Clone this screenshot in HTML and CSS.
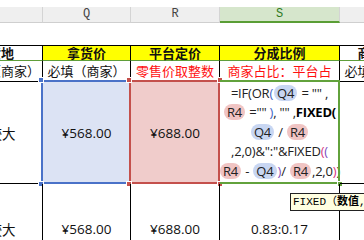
FILE: index.html
```html
<!DOCTYPE html>
<html lang="zh-CN">
<head>
  <meta charset="UTF-8" />
  <title>分成比例</title>
  <link rel="stylesheet" href="styles.css">
</head>
<body>
  <div class="sheet">
    <!-- column headers -->
    <div class="colhead"></div>
    <div class="colhead">Q</div>
    <div class="colhead">R</div>
    <div class="colhead active">S</div>
    <div class="colhead">T</div>

    <!-- row 2: empty -->
    <div class="blank"></div>
    <div class="blank"></div>
    <div class="blank"></div>
    <div class="blank"></div>
    <div class="blank"></div>

    <!-- row 3: titles -->
    <div class="cell title">商品的发货地</div>
    <div class="cell title yellow">拿货价</div>
    <div class="cell title yellow">平台定价</div>
    <div class="cell title yellow">分成比例</div>
    <div class="cell title">商品链接</div>

    <!-- row 4: notes -->
    <div class="cell note">发货地址必填（商家）</div>
    <div class="cell note">必填（商家）</div>
    <div class="cell note red">零售价取整数</div>
    <div class="cell note red">商家占比：平台占</div>
    <div class="cell note">必填（商家）</div>

    <!-- row 5: editing row -->
    <div class="cell num">库存数量较大</div>
    <div class="cell num ref-q">
      ¥568.00
      <div class="frame frame-q">
        <span class="handle tl"></span>
        <span class="handle bl"></span>
      </div>
    </div>
    <div class="cell num ref-r">
      ¥688.00
      <div class="frame frame-r">
        <span class="handle tl"></span>
        <span class="handle bl"></span>
        <span class="handle tr"></span>
        <span class="handle br"></span>
      </div>
    </div>
    <div class="cell formula">
      <div class="formula-text">
        <div>=IF(OR<span class="p-blue">(</span><span class="pill pill-q">Q4</span> = "" ,</div>
        <div><span class="pill pill-r">R4</span> ="" <span class="p-blue">)</span>, "" ,<b>FIXED(</b></div>
        <div><span class="pill pill-q">Q4</span> / <span class="pill pill-r">R4</span></div>
        <div>,2,0)&amp;":"&amp;FIXED<span class="p-pink">(</span><span class="p-purple">(</span></div>
        <div><span class="pill pill-r">R4</span> - <span class="pill pill-q">Q4</span><span class="p-purple">)</span>/ <span class="pill pill-r">R4</span>,2,0<span class="p-pink">)</span>)</div>
      </div>
      <div class="frame frame-s">
        <span class="handle br"></span>
      </div>
    </div>
    <div class="cell"></div>

    <!-- row 6 -->
    <div class="cell num">库存数量较大</div>
    <div class="cell num">¥568.00</div>
    <div class="cell num">¥688.00</div>
    <div class="cell num">0.83:0.17</div>
    <div class="cell"></div>
  </div>

  <div class="tip">FIXED（<b>数值</b>, [小数位数], [无逗号分隔])</div>
</body>
</html>
```

FILE: styles.css
```css
* {
  box-sizing: border-box;
}

body {
  margin: 0;
  padding-top: 7px;
  width: 364px;
  height: 240px;
  overflow: hidden;
  position: relative;
  background: #fff;
  font-family: "Noto Sans CJK SC", sans-serif;
  color: #111;
}

.sheet {
  display: grid;
  grid-template-columns: 135px 88px 89px 120px 88px;
  grid-template-rows: 16px 23px 15px 21px 102px 90px;
  margin-left: -92px;
  width: max-content;
}

.colhead {
  background: #efefef;
  border-right: 1px solid #d4d4d4;
  border-bottom: 1px solid #cfcfcf;
  font-family: "Liberation Mono", monospace;
  font-size: 12px;
  line-height: 15px;
  text-align: center;
  color: #444;
}

.colhead.active {
  background: #d6e6cc;
  border-bottom: 2px solid #5a9e35;
  color: #2e7a1f;
}

.blank {
  border-bottom: 1px solid #000;
}

.cell {
  display: flex;
  align-items: center;
  justify-content: center;
  position: relative;
  border-right: 1px solid #000;
  border-bottom: 1px solid #000;
  white-space: nowrap;
  font-size: 13px;
}

.title {
  font-weight: bold;
  line-height: 14px;
  border-bottom: 1px solid #5f9e3a;
}

.yellow {
  background: #ffff00;
}

.note {
  line-height: 20px;
}

.red {
  color: #ff1010;
}

.num {
  font-family: "Open Sans", "Noto Sans CJK SC", sans-serif;
  font-size: 13.5px;
}

.ref-q {
  background: #dce3f4;
}

.ref-r {
  background: #f0cccb;
}

.frame {
  position: absolute;
  top: -2px;
  left: -2px;
  right: -1px;
  bottom: -1px;
  border: 2px solid;
}

.frame-q {
  border-color: #4a72c8;
}

.frame-r {
  border-color: #c4504c;
}

.frame-s {
  left: 0;
  border-color: #62a23c;
  border-left: none;
}

.handle {
  position: absolute;
  width: 6px;
  height: 6px;
  border: 1px solid #fff;
}

.frame-q .handle {
  background: #4a72c8;
}

.frame-r .handle {
  background: #c4504c;
}

.frame-s .handle {
  background: #62a23c;
}

.handle.tl { top: -5px; left: -5px; }
.handle.bl { bottom: -5px; left: -5px; }
.handle.tr { top: -5px; right: -5px; }
.handle.br { bottom: -5px; right: -5px; }

.formula-text {
  font-family: "Open Sans", "Noto Sans CJK SC", sans-serif;
  font-size: 13px;
  letter-spacing: -0.2px;
  line-height: 19.5px;
  height: 97.5px;
  text-align: center;
  color: #222;
}

.formula-text b {
  color: #000;
}

.pill {
  display: inline-block;
  padding: 0 3px;
  margin: 0 1px;
  line-height: 16px;
  border-radius: 8px;
}

.pill-q {
  background: #c8d6f2;
}

.pill-r {
  background: #f0c4c3;
}

.p-blue { color: #3e63c6; }
.p-pink { color: #d8347e; }
.p-purple { color: #7a4bc0; }

.tip {
  position: absolute;
  top: 193px;
  left: 290px;
  height: 18px;
  padding: 0 6px 0 2px;
  background: #ffffe1;
  border: 1px solid #222;
  font-family: "Liberation Mono", "Noto Sans CJK SC", monospace;
  font-size: 11px;
  line-height: 16px;
  white-space: nowrap;
  color: #000;
}
```
